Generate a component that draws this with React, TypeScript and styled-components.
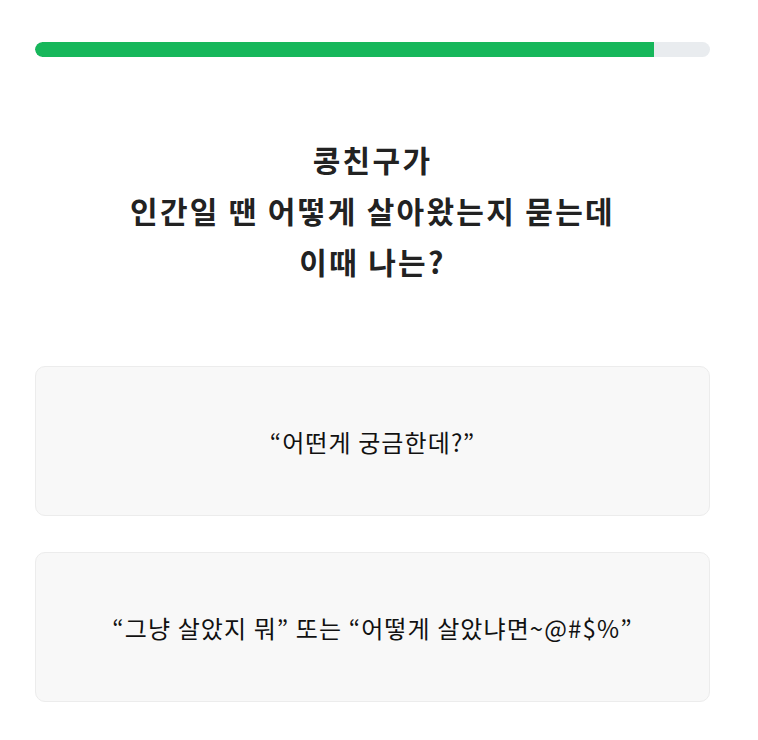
import React from 'react';
import styled, { createGlobalStyle } from 'styled-components';

const GlobalStyle = createGlobalStyle`
  html, body {
    margin: 0;
    padding: 0;
    background: #ffffff;
    font-family: "Noto Sans CJK KR", "Noto Sans", sans-serif;
  }
`;

const Page = styled.div`
  width: 675px;
  padding: 42px 0 40px 35px;
`;

const Track = styled.div`
  height: 15px;
  border-radius: 8px;
  background: #e9ecef;
  overflow: hidden;
`;

const Fill = styled.div`
  height: 100%;
  background: #17b75b;
  border-radius: 8px 0 0 8px;
`;

const Question = styled.h1`
  margin: 77px 0 79px;
  font-size: 30px;
  font-weight: 700;
  line-height: 51px;
  letter-spacing: 2.3px;
  color: #222222;
  text-align: center;
`;

const Options = styled.div`
  display: flex;
  flex-direction: column;
  gap: 36px;
`;

const Option = styled.button`
  display: flex;
  align-items: center;
  justify-content: center;
  height: 150px;
  border: 1px solid #ececec;
  border-radius: 10px;
  background: #f8f8f8;
  font-family: inherit;
  font-size: 24px;
  letter-spacing: 1.1px;
  color: #111111;
  cursor: pointer;
`;

const options = [
  '“어떤게 궁금한데?”',
  '“그냥 살았지 뭐” 또는 “어떻게 살았냐면~@#$%”',
];

const App = () => {
  const step = 11;
  const total = 12;
  return (
    <>
      <GlobalStyle />
      <Page>
        <Track>
          <Fill style={{ width: `${(step / total) * 100}%` }} />
        </Track>
        <Question>
          콩친구가
          <br />
          인간일 땐 어떻게 살아왔는지 묻는데
          <br />
          이때 나는?
        </Question>
        <Options>
          {options.map((text) => (
            <Option key={text}>{text}</Option>
          ))}
        </Options>
      </Page>
    </>
  );
};

export default App;
